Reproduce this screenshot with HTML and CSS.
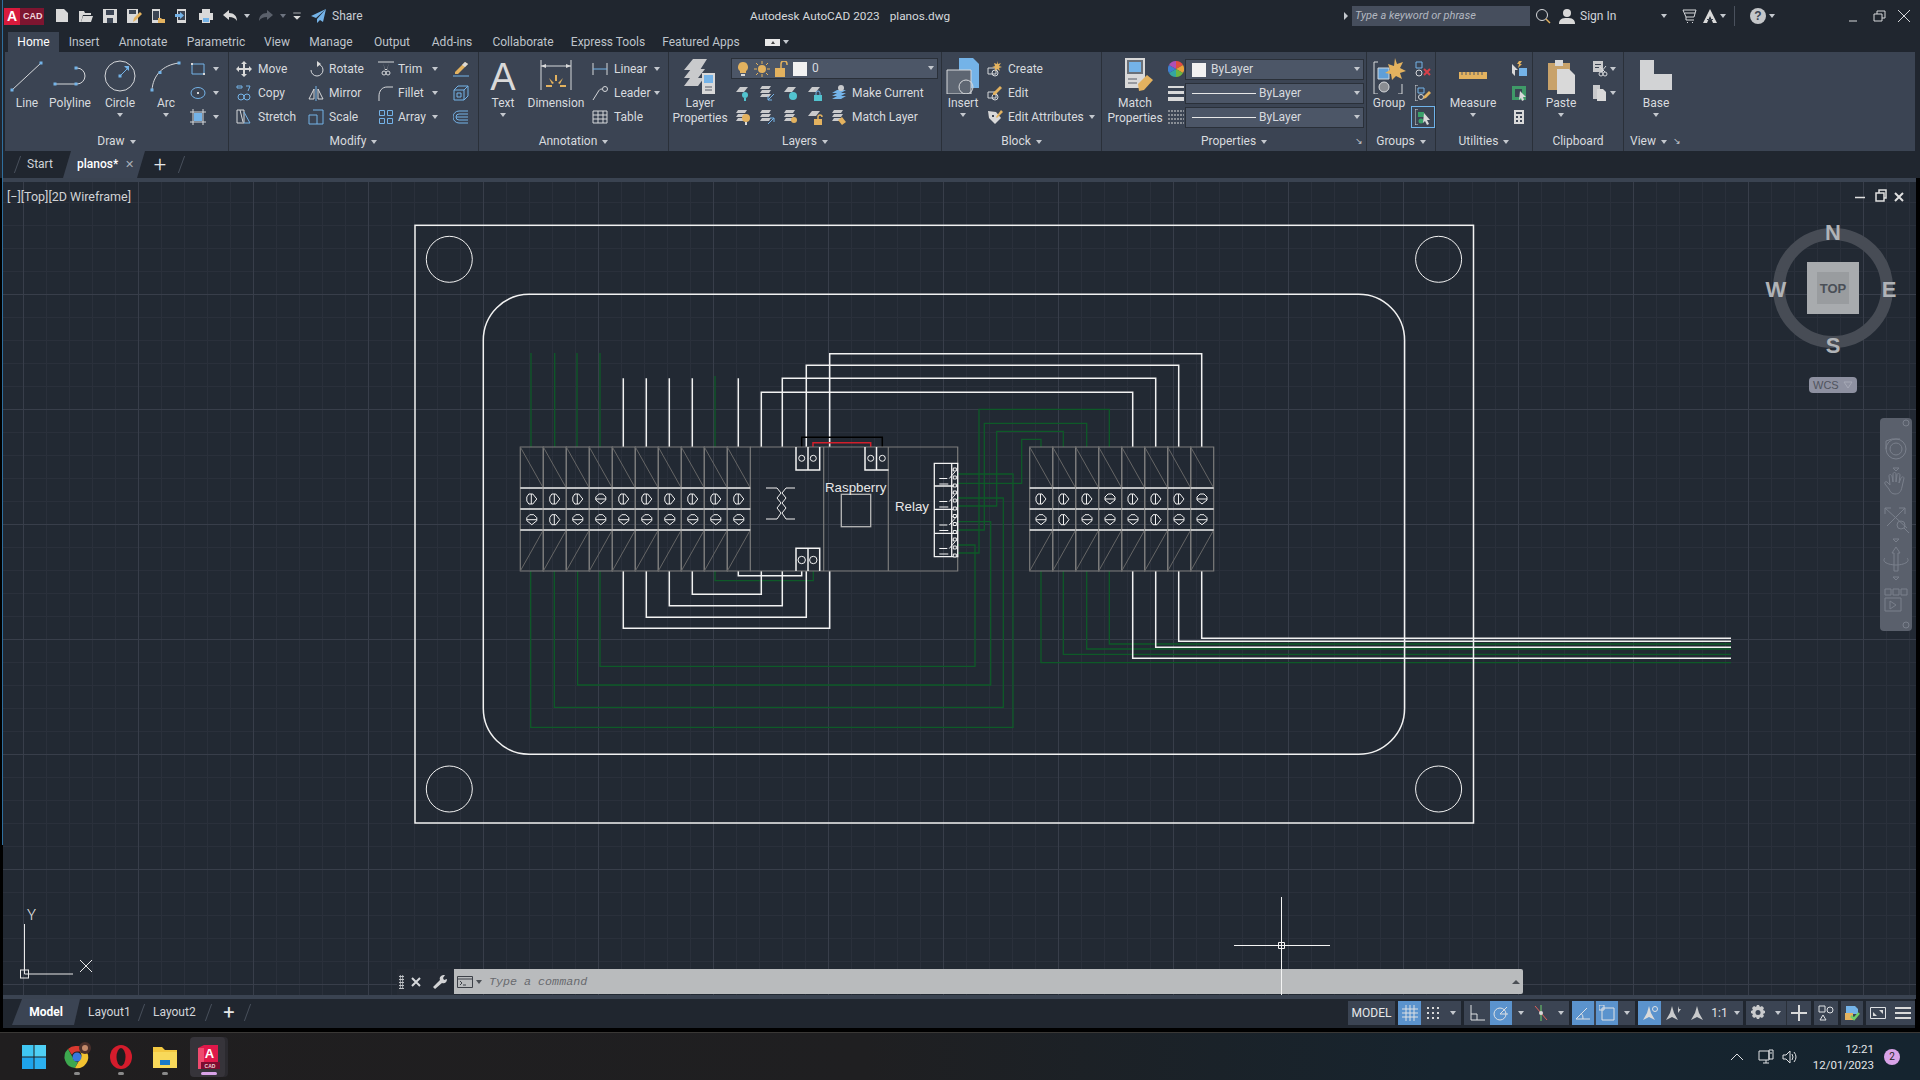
FILE: index.html
```html
<!DOCTYPE html>
<html lang="en">
<head>
<meta charset="utf-8">
<title>Autodesk AutoCAD 2023 planos.dwg</title>
<link rel="stylesheet" href="styles.css">
</head>
<body>
<div class="edge"></div>
<div class="top">
  <header class="titlebar">
    <div class="logo"><span class="logo-a">A</span><span class="logo-cad">CAD</span></div>
    <div class="qat">
      <svg class="ic" viewBox="0 0 16 16"><path class="fw" d="M2 1h8l4 4v9H2z"/></svg>
      <svg class="ic" viewBox="0 0 16 16"><path class="fw" d="M1 3h5l1 2h6v2H5l-2 7H1z"/><path class="fw" d="M5 8h10l-2 6H3z"/></svg>
      <svg class="ic" viewBox="0 0 16 16"><path class="fw" d="M1 1h14v14H1z"/><path class="dk" d="M4 2h8v5H4zM5 10h6v5H5z"/></svg>
      <svg class="ic" viewBox="0 0 16 16"><path class="fw" d="M1 1h11v14H1z"/><path class="dk" d="M3 2h7v4H3z"/><path class="fg" d="M7 14l1-4 6-6 2 2-6 6z"/></svg>
      <svg class="ic" viewBox="0 0 16 16"><path class="fw" d="M2 1h8v14H2z"/><path class="dk" d="M3 3h6v9H3z"/><path class="fg" d="M8 10h3l1 1h3v4H8z"/></svg>
      <svg class="ic" viewBox="0 0 16 16"><path class="fw" d="M3 1h9v14H3z"/><path class="dk" d="M4 3h7v9H4z"/><path class="fb" d="M1 6h5V4l4 3.500-4 3.500V9H1z"/></svg>
      <svg class="ic" viewBox="0 0 16 16"><path class="fw" d="M4 1h8v4H4zM1 5h14v7h-3v3H4v-3H1z"/><path class="fb" d="M5 10h6v4H5z"/></svg>
      <svg class="ic i-undo" viewBox="0 0 16 16"><path class="fw" d="M1 7l6-5v3c5 0 8 3 8 8-2-3-4-4-8-4v3z"/></svg>
      <i class="ar ar-undo"></i>
      <svg class="ic i-redo" viewBox="0 0 16 16"><path class="fd" d="M15 7L9 2v3C4 5 1 8 1 13c2-3 4-4 8-4v3z"/></svg>
      <i class="ar ar-dim"></i>
      <svg class="ic i-cust" viewBox="0 0 16 16"><path class="s" d="M3 4h10"/><path class="fw" d="M3 8h10l-5 5z"/></svg>
      <svg class="ic i-share" viewBox="0 0 16 16"><path class="fb" d="M15 1L0 8l5 2zM15 1L6 11v4l3-3 3 2z"/></svg>
      <span class="share">Share</span>
    </div>
    <div class="doc"><span>Autodesk AutoCAD 2023</span><span>planos.dwg</span></div>
    <div class="tb-right">
      <i class="tri-r"></i>
      <div class="search">Type a keyword or phrase</div>
      <svg class="ic i-mag" viewBox="0 0 16 16"><circle class="s" cx="7" cy="7" r="5.500"/><path class="sg" d="M11 11l4 4"/></svg>
      <svg class="ic i-user" viewBox="0 0 16 16"><circle class="fw" cx="8" cy="5" r="4"/><path class="fw" d="M0 16c0-5 3-6 8-6s8 1 8 6z"/></svg>
      <span class="signin">Sign In</span>
      <i class="ar ar-sign"></i>
      <svg class="ic i-cart" viewBox="0 0 16 16"><path class="s" d="M1 2h13l-2 7H4zM4 9v3h8M3 5h10M5 14.500h1M10 14.500h1"/></svg>
      <svg class="ic i-a" viewBox="0 0 16 16"><path class="fw" d="M8 1l7 14h-4L8 8l-3 7H1z"/><path class="dk" d="M5 11h6v1H5z"/></svg>
      <i class="ar ar-a"></i>
      <span class="tb-sep"></span>
      <span class="help">?</span>
      <i class="ar ar-help"></i>
      <svg class="ic i-min" viewBox="0 0 16 16"><path class="s" d="M3 13h8"/></svg>
      <svg class="ic i-res" viewBox="0 0 16 16"><path class="s" d="M3 6h8v7H3zM6 6V3h8v7h-3"/></svg>
      <svg class="ic i-close" viewBox="0 0 16 16"><path class="s" d="M2 2l12 12M14 2L2 14"/></svg>
    </div>
  </header>

  <nav class="rtabs">
    <span class="rtab active">Home</span><span class="rtab">Insert</span><span class="rtab">Annotate</span><span class="rtab">Parametric</span><span class="rtab">View</span><span class="rtab">Manage</span><span class="rtab">Output</span><span class="rtab">Add-ins</span><span class="rtab">Collaborate</span><span class="rtab">Express Tools</span><span class="rtab">Featured Apps</span>
    <span class="rtoggle"><i class="tri-w"></i></span><i class="ar"></i>
  </nav>

  <section class="ribbon">
    <div class="panel p-draw">
      <div class="pbody">
        <div class="tool w44"><svg class="big" viewBox="0 0 36 36"><path class="s" d="M3 32L32 5"/><path class="fb" d="M1.500 30.500h3v3h-3zM30.500 3.500h3v3h-3z"/></svg><span>Line</span></div>
        <div class="tool w42"><svg class="big" viewBox="0 0 36 36"><path class="s" d="M3 26h22a8 8 0 0 0 0-16"/><path class="fb" d="M1.500 24.500h3v3h-3zM22.500 24.500h3v3h-3zM22.500 8.500h3v3h-3z"/></svg><span>Polyline</span></div>
        <div class="tool w58"><svg class="big" viewBox="0 0 36 36"><circle class="s" cx="18" cy="18" r="15"/><path class="b" d="M18 18l7-7"/><path class="fb" d="M16.500 16.500h3v3h-3zM22 8h5v5z"/></svg><span>Circle</span><i class="ar"></i></div>
        <div class="tool w34"><svg class="big" viewBox="0 0 36 36"><path class="s" d="M4 32C5 18 14 7 31 5"/><path class="fb" d="M2.500 30.500h3v3h-3zM10.500 13h3v3h-3zM29.500 3.500h3v3h-3z"/></svg><span>Arc</span><i class="ar"></i></div>
        <div class="col f1 pl7 pr9">
          <div class="row"><svg class="ic" viewBox="0 0 16 16"><path class="b" d="M2 3h12v10H2z"/><path class="fw" d="M1 2h2v2H1zM13 12h2v2h-2z"/></svg><i class="ar ml-a"></i></div>
          <div class="row"><svg class="ic" viewBox="0 0 16 16"><ellipse class="b" cx="8" cy="8" rx="7" ry="5.500"/><path class="fw" d="M7 7h2v2H7z"/></svg><i class="ar ml-a"></i></div>
          <div class="row"><svg class="ic" viewBox="0 0 16 16"><path class="s" d="M3 0v16M13 0v16M0 3h16M0 13h16"/><path class="fb" d="M4 4h8v8H4z"/></svg><i class="ar ml-a"></i></div>
        </div>
      </div>
      <div class="ptitle">Draw <i class="ar"></i></div>
    </div>

    <div class="panel p-modify">
      <div class="pbody">
        <div class="col w79 pl7">
          <div class="row"><svg class="ic" viewBox="0 0 16 16"><path class="fw" d="M8 0l3 3H9v4h4V5l3 3-3 3V9H9v4h2l-3 3-3-3h2V9H3v2L0 8l3-3v2h4V3H5z"/></svg><span class="lab">Move</span></div>
          <div class="row"><svg class="ic" viewBox="0 0 16 16"><path class="b" d="M1 1h5v2H1zM10 1h4l-2 5"/><circle class="b" cx="5" cy="12" r="3"/><circle class="b" cx="11" cy="12" r="3"/></svg><span class="lab">Copy</span></div>
          <div class="row"><svg class="ic" viewBox="0 0 16 16"><path class="s" d="M1 1h7v13H1z"/><path class="b" d="M8 3l6 11H8"/><path class="s" d="M4 1l3 12"/></svg><span class="lab">Stretch</span></div>
        </div>
        <div class="col w70">
          <div class="row g5"><svg class="ic" viewBox="0 0 16 16"><path class="s" d="M9 3a6 6 0 1 1-6 6"/><path class="fw" d="M9 0l4 3-4 3z"/></svg><span class="lab">Rotate</span></div>
          <div class="row g5"><svg class="ic" viewBox="0 0 16 16"><path class="s" d="M1 14L6 4v10zM15 14L10 4v10z"/><path class="b" d="M8 1v15"/></svg><span class="lab">Mirror</span></div>
          <div class="row g5"><svg class="ic" viewBox="0 0 16 16"><path class="b" d="M1 6h8v9H1zM5 1h10v14H9"/></svg><span class="lab">Scale</span></div>
        </div>
        <div class="col w75 pr15">
          <div class="row g4"><svg class="ic" viewBox="0 0 16 16"><path class="s" d="M0 1h16"/><path class="fw" d="M5 2l2 7h2l2-7-2 6H7z"/><circle class="s" cx="6" cy="12" r="2"/><circle class="s" cx="10" cy="12" r="2"/></svg><span class="lab">Trim</span><i class="ar ml-a"></i></div>
          <div class="row g4"><svg class="ic" viewBox="0 0 16 16"><path class="s" d="M1 16v-5c0-5 3-9 8-9h6"/></svg><span class="lab">Fillet</span><i class="ar ml-a"></i></div>
          <div class="row g4"><svg class="ic" viewBox="0 0 16 16"><path class="b" d="M1.500 1.500h5v5h-5zM9.500 1.500h5v5h-5zM1.500 9.500h5v5h-5zM9.500 9.500h5v5h-5z"/></svg><span class="lab">Array</span><i class="ar ml-a"></i></div>
        </div>
        <div class="col">
          <div class="row"><svg class="ic" viewBox="0 0 16 16"><path class="fg" d="M2 11L12 1l3 2L5 13H2z"/><path class="fw" d="M12 1l3 2-3 3-3-2z"/><path class="b" d="M0 15h16"/></svg></div>
          <div class="row"><svg class="ic" viewBox="0 0 16 16"><path class="b" d="M1 5h10v10H1zM1 5l4-4h10v10l-4 4M4 8h4v4H4zM11 5l4-4"/></svg></div>
          <div class="row"><svg class="ic" viewBox="0 0 16 16"><path class="b" d="M15 2H6a6 6 0 0 0 0 12h9M15 5H6a3 3 0 0 0 0 6h9M3 8h12"/></svg></div>
        </div>
      </div>
      <div class="ptitle">Modify <i class="ar"></i></div>
    </div>

    <div class="panel p-annot">
      <div class="pbody">
        <div class="tool w48"><span class="big-a">A</span><span>Text</span><i class="ar"></i></div>
        <div class="tool w58"><svg class="big" viewBox="0 0 36 36"><path class="s" d="M3 2v30M33 2v30M3 8h30"/><path class="fw" d="M3 8l5-2v4zM33 8l-5-2v4z"/><path class="fg" d="M17 17h2v6h-2zM11 20l5 5-2 1zM25 20l-5 5 2 1zM8 27h6v2H8zM22 27h6v2h-6z"/></svg><span>Dimension</span></div>
        <div class="col f1 pl7 pr8">
          <div class="row"><svg class="ic" viewBox="0 0 16 16"><path class="s" d="M1 2v12M15 2v12"/><path class="b" d="M1 8h14"/></svg><span class="lab">Linear</span><i class="ar ml-a"></i></div>
          <div class="row"><svg class="ic" viewBox="0 0 16 16"><path class="s" d="M1 15l5-8c1-2 2-3 4-3"/><circle class="s" cx="13" cy="4" r="2.500"/></svg><span class="lab">Leader</span><i class="ar ml-a"></i></div>
          <div class="row"><svg class="ic" viewBox="0 0 16 16"><path class="s" d="M1 2h14v12H1zM1 6h14M1 10h14M6 2v12M11 2v12"/></svg><span class="lab">Table</span></div>
        </div>
      </div>
      <div class="ptitle">Annotation <i class="ar"></i></div>
    </div>

    <div class="panel p-layers">
      <div class="pbody">
        <div class="tool w62"><svg class="big" viewBox="0 0 36 36"><path class="fd2" d="M2 12L11 1h14l-7 11zM2 20l7-9h14l-7 9zM2 28l6-8h14l-6 8z"/><path class="fw" d="M20 15h13v21H20z"/><path class="fb" d="M22 17h9v8h-9z"/><path class="sd" d="M23 29h7M23 32h7"/></svg><span>Layer</span><span>Properties</span></div>
        <div class="col f1">
          <div class="combo c-layer">
            <svg class="ic" viewBox="0 0 16 16"><path class="fg" d="M8 1a5 5 0 0 1 3 9v2H5v-2A5 5 0 0 1 8 1z"/><path class="fw" d="M6 13h4v2H6z"/></svg>
            <svg class="ic" viewBox="0 0 16 16"><circle class="fg" cx="8" cy="8" r="4"/><path class="sgd" d="M8 0v3M8 13v3M0 8h3M13 8h3M2 2l2 2M12 12l2 2M14 2l-2 2M2 14l2-2"/></svg>
            <svg class="ic" viewBox="0 0 16 16"><path class="fg" d="M2 7h10v9H2z"/><path class="sg" d="M8 7V3a3 3 0 0 1 6 0v1"/></svg>
            <span class="swatch"></span><span>0</span><i class="ar combo-ar"></i>
          </div>
          <div class="row g8 pl4">
            <svg class="ic" viewBox="0 0 16 16"><path class="fd2" d="M1 7l4-5h8L9 7z"/><circle class="fc" cx="10" cy="10" r="3"/><path class="fc" d="M9 13h2v3H9z"/></svg>
            <svg class="ic" viewBox="0 0 16 16"><path class="fd2" d="M1 4l2-3h9l-2 3zM1 8l2-3h9l-2 3zM1 12l2-3h9l-2 3z"/><path class="b" d="M15 9l-6 6M9 11v4h4"/></svg>
            <svg class="ic" viewBox="0 0 16 16"><path class="fd2" d="M1 7l4-5h8L9 7z"/><circle class="fc" cx="10" cy="11" r="4"/></svg>
            <svg class="ic" viewBox="0 0 16 16"><path class="fd2" d="M1 7l4-5h8L9 7z"/><path class="fc" d="M7 10h8v6H7z"/><path class="b" d="M9 10V8a2 2 0 0 1 4 0v2"/></svg>
            <svg class="ic" viewBox="0 0 16 16"><path class="fb" d="M1 8l5-3h9l-5 3zM1 11l5-3h9l-5 3zM1 14l5-3h9l-5 3z"/><circle class="fd2" cx="10" cy="3" r="3"/></svg>
            <span class="lab lab-l">Make Current</span>
          </div>
          <div class="row g8 pl4">
            <svg class="ic" viewBox="0 0 16 16"><path class="fd2" d="M1 4l2-3h9l-2 3zM1 8l2-3h9l-2 3zM1 12l2-3h9l-2 3z"/><circle class="fg" cx="11" cy="9" r="4"/><path class="fw" d="M10 13h2v3h-2z"/></svg>
            <svg class="ic" viewBox="0 0 16 16"><path class="fd2" d="M1 4l2-3h9l-2 3zM1 8l2-3h9l-2 3zM1 12l2-3h9l-2 3z"/><path class="b" d="M9 15l6-6M11 9h4v4"/></svg>
            <svg class="ic" viewBox="0 0 16 16"><path class="fd2" d="M1 4l2-3h9l-2 3zM1 8l2-3h9l-2 3zM1 12l2-3h9l-2 3z"/><circle class="fg" cx="11" cy="11" r="3"/></svg>
            <svg class="ic" viewBox="0 0 16 16"><path class="fd2" d="M1 7l4-5h8L9 7z"/><path class="fg" d="M7 10h8v6H7z"/><path class="sg" d="M11 10V8a2 2 0 0 1 4 0"/></svg>
            <svg class="ic" viewBox="0 0 16 16"><path class="fd2" d="M1 4l2-3h9l-2 3zM1 8l2-3h9l-2 3zM1 12l2-3h9l-2 3z"/><path class="fg" d="M7 11l4-3 4 5-4 3z"/></svg>
            <span class="lab lab-l">Match Layer</span>
          </div>
        </div>
      </div>
      <div class="ptitle">Layers <i class="ar"></i></div>
    </div>

    <div class="panel p-block">
      <div class="pbody">
        <div class="tool w42"><svg class="big" viewBox="0 0 36 36"><path class="fb" d="M14 0h14l6 6v24H14z"/><path class="ins" d="M2 12h24v24H2z"/><circle class="ins2" cx="21" cy="29" r="7"/></svg><span>Insert</span><i class="ar"></i></div>
        <div class="col f1 pl3 pr6">
          <div class="row g5"><svg class="ic" viewBox="0 0 16 16"><path class="s" d="M1 7h8v6H1z"/><circle class="s" cx="8" cy="12" r="3"/><path class="fg" d="M10 0l1 3 3-1-2 3 3 1-3 1 1 3-3-2-2 2 0-3-3-1 3-1-1-3 3 1z"/></svg><span class="lab">Create</span></div>
          <div class="row g5"><svg class="ic" viewBox="0 0 16 16"><path class="s" d="M1 7h8v6H1z"/><circle class="s" cx="8" cy="12" r="3"/><path class="fg" d="M6 8l7-7 2 2-7 7H6z"/></svg><span class="lab">Edit</span></div>
          <div class="row g5"><svg class="ic" viewBox="0 0 16 16"><path class="fw" d="M1 2l8 1 5 6-6 6-6-6z"/><path class="dk" d="M5 6h2v2H5z"/><path class="fg" d="M9 8l5-7 2 2-6 6z"/></svg><span class="lab">Edit Attributes</span><i class="ar ml-a"></i></div>
        </div>
      </div>
      <div class="ptitle">Block <i class="ar"></i></div>
    </div>

    <div class="panel p-props">
      <div class="pbody">
        <div class="tool w66"><svg class="big" viewBox="0 0 36 36"><path class="fw" d="M8 0h20v30H8z"/><path class="dk2" d="M10 2h16v14H10z"/><path class="fb" d="M12 4h12v10H12z"/><path class="sd" d="M11 21h9M11 25h9"/><path class="fg" d="M21 26l9-9 6 5-9 10-5 1z"/></svg><span>Match</span><span>Properties</span></div>
        <div class="col w17">
          <div class="row"><svg class="ic" viewBox="0 0 16 16"><path d="M8 0a8 8 0 0 1 7 4L8 8z" fill="#e34c3f"/><path d="M15 4a8 8 0 0 1 0 8L8 8z" fill="#e8a23a"/><path d="M15 12a8 8 0 0 1-7 4V8z" fill="#6fb53f"/><path d="M8 16a8 8 0 0 1-7-4l7-4z" fill="#34a6a0"/><path d="M1 12a8 8 0 0 1 0-8l7 4z" fill="#3f7fd0"/><path d="M1 4a8 8 0 0 1 7-4v8z" fill="#b04fb5"/></svg></div>
          <div class="row"><svg class="ic" viewBox="0 0 16 16"><path class="fw" d="M0 1h16v2H0zM0 6h16v3H0zM0 12h16v4H0z"/></svg></div>
          <div class="row"><svg class="ic" viewBox="0 0 16 16"><path class="sdash" d="M0 2h16M0 6h16M0 10h16M0 14h16"/></svg></div>
        </div>
        <div class="col combos">
          <div class="combo c-prop"><span class="swatch sw-p"></span><span>ByLayer</span><i class="ar combo-ar"></i></div>
          <div class="combo c-prop"><span class="ln"></span><span class="bl">ByLayer</span><i class="ar combo-ar"></i></div>
          <div class="combo c-prop"><span class="ln"></span><span class="bl">ByLayer</span><i class="ar combo-ar"></i></div>
        </div>
      </div>
      <div class="ptitle pt-launch"><span class="pt-c">Properties <i class="ar"></i></span><span class="launch">&#8600;</span></div>
    </div>

    <div class="panel p-groups">
      <div class="pbody">
        <div class="tool w44"><svg class="big" viewBox="0 0 36 36"><path class="s" d="M7 4H3v32h4M27 36h4V26"/><path class="fb2" d="M7 10h11v11H7z"/><circle class="fgr" cx="13" cy="29" r="5"/><path class="fg" d="M24 0l2 6 6-2-3 6 6 3-6 2 2 6-6-3-4 4-1-6-6-1 5-3-2-6 6 2z"/></svg><span>Group</span></div>
        <div class="col w24">
          <div class="row rc"><svg class="ic" viewBox="0 0 16 16"><path class="b" d="M1 1h6v6H1z"/><circle class="s" cx="4" cy="12" r="3"/><path class="sr" d="M9 8l6 6M15 8l-6 6"/></svg></div>
          <div class="row rc"><svg class="ic" viewBox="0 0 16 16"><path class="s" d="M3 0H0v16h3"/><path class="b" d="M3 3h6v5H3z"/><circle class="s" cx="6" cy="12" r="2.500"/><path class="fg" d="M8 14l1-3 5-5 2 2-5 5z"/></svg></div>
          <div class="row rc hl"><svg class="ic" viewBox="0 0 16 16"><path class="s" d="M3 0H0v16h3"/><path class="fg2" d="M3 3h6v5H3z"/><circle class="fg2" cx="6" cy="12" r="2.500"/><path class="fw" d="M9 4l6 7-3 0 2 4-2 1-2-4-2 2z"/></svg></div>
        </div>
      </div>
      <div class="ptitle">Groups <i class="ar"></i></div>
    </div>

    <div class="panel p-util">
      <div class="pbody">
        <div class="tool w74"><svg class="big" viewBox="0 0 36 36"><path class="fg" d="M4 14h28v7H4z"/><path class="sd" d="M7 14v3M11 14v3M15 14v3M19 14v3M23 14v3M27 14v3"/></svg><span>Measure</span><i class="ar"></i></div>
        <div class="col">
          <div class="row"><svg class="ic" viewBox="0 0 16 16"><path class="fw" d="M1 3l6 6H4l0 6-3-3z"/><path class="fb" d="M8 7h8v8H8z"/><path class="fg" d="M8 0l3 0-2 3 2 0-4 4 1-4H6z"/></svg></div>
          <div class="row"><svg class="ic" viewBox="0 0 16 16"><path class="fgn" d="M1 1h14v14H1z"/><path class="dk" d="M4 4h7v8H4z"/><path class="fw" d="M9 6l6 6-3 0 1 3-2 1-1-3-2 2z"/></svg></div>
          <div class="row"><svg class="ic" viewBox="0 0 16 16"><path class="fw" d="M3 1h10v14H3z"/><path class="dk" d="M5 3h6v2H5zM5 7h2v2H5zM9 7h2v2H9zM5 11h2v2H5zM9 11h2v2H9z"/></svg></div>
        </div>
      </div>
      <div class="ptitle">Utilities <i class="ar"></i></div>
    </div>

    <div class="panel p-clip">
      <div class="pbody">
        <div class="tool w56"><svg class="big" viewBox="0 0 36 36"><path d="M5 5h22v27H5z" fill="#c8a26a"/><path class="fw" d="M12 2h8v6h-8z"/><path class="fw" d="M14 11h12l6 6v19H14z"/></svg><span>Paste</span><i class="ar"></i></div>
        <div class="col f1 pl3 pr7">
          <div class="row"><svg class="ic" viewBox="0 0 16 16"><path class="fd2" d="M1 0h10v11H1z"/><path class="dk" d="M3 3h6v1H3zM3 6h4v1H3z"/><circle class="s" cx="9" cy="13" r="2"/><circle class="s" cx="13" cy="13" r="2"/><path class="s" d="M9 11l5-6M13 11L8 6"/></svg><i class="ar ml-a"></i></div>
          <div class="row"><svg class="ic" viewBox="0 0 16 16"><path class="fd2" d="M1 0h7l0 14H1z"/><path class="fw" d="M5 4h6l3 3v9H5z"/></svg><i class="ar ml-a"></i></div>
        </div>
      </div>
      <div class="ptitle">Clipboard</div>
    </div>

    <div class="panel p-view">
      <div class="pbody">
        <div class="tool w64"><svg class="big" viewBox="0 0 36 36"><path class="fd3" d="M2 2h14v14h18v16H2z"/></svg><span>Base</span><i class="ar"></i></div>
      </div>
      <div class="ptitle pt-left">View <i class="ar"></i><span class="launch l2">&#8600;</span></div>
    </div>
  </section>

  <nav class="ftabs">
    <i class="slash"></i>
    <span class="ftab">Start</span>
    <span class="ftab active"><b>planos*</b><span class="fx">&#10005;</span></span>
    <span class="fplus">+</span>
    <i class="slash"></i>
  </nav>
</div>
<div class="strip"></div>

<main class="canvas">
  <div class="vp-label">[&#8722;][Top][2D Wireframe]</div>
  <svg class="drawing" viewBox="3 182 1913 813" width="1913" height="813">
    <defs>
      <g id="cell">
        <path class="cg" d="M0 0h23v124H0z"/>
        <path class="cd" d="M0 0l23 41M0 124l23-41"/>
        <path class="cw" d="M0 41h23M0 62h23M0 83h23"/>
      </g>
      <g id="sv"><path class="sc" d="M-3-5h4l4 5-4 5h-4l-2-3v-4z"/><path class="sc" d="M-.5-5V5"/></g>
      <g id="sh"><path class="sc" d="M-5-2l3-3h4l3 3v3l-5 4-5-4z"/><path class="sc" d="M-5 0H5"/></g>
      <g id="sw">
        <path class="rl" d="M5 15.500h8M15 15.500l6-7M18 7h5M5 21h9"/>
        <path class="rlw" d="M19 5h3v3h-3zM19 13h3v3h-3zM19 21h3v3h-3z"/>
      </g>
    </defs>

    <g class="green">
      <path d="M531 447V353M554.700 447V353M577 447V353M600 447V353M715 447V376"/>
      <path d="M530.700 571V727.300H1013V474H958"/>
      <path d="M554.300 571V707.300H1003.300V498H958"/>
      <path d="M577.600 571V685H990.700V521.700H958"/>
      <path d="M600 571V666.300H975V545H958"/>
      <path d="M1109.300 447V409.300H979V553H958"/>
      <path d="M1086.700 447V423.300H984.300V530H958"/>
      <path d="M1063.300 447V431.300H996.700V506H958"/>
      <path d="M1041 447V439.300H1021.700V483.300H958"/>
      <path d="M1041 571V662.700H1731M1063.300 571V654.300H1731M1086.700 571V649H1731M1109.300 571V644H1731"/>
      <path d="M715 571V580.700H813.300V571"/>
    </g>

    <g class="wh">
      <rect x="415" y="225.300" width="1058.500" height="597.700"/>
      <rect x="483.300" y="294.300" width="921.300" height="460" rx="46" ry="46"/>
      <circle class="thin" cx="449.300" cy="259.300" r="23"/>
      <circle class="thin" cx="1438.600" cy="259.300" r="23"/>
      <circle class="thin" cx="449.300" cy="789" r="23"/>
      <circle class="thin" cx="1438.600" cy="789" r="23"/>
      <path d="M623.300 447V378.300M646.300 447V378.300M669.300 447V378.300M692.300 447V378.300M738.300 447V378.300"/>
      <path d="M761.300 447V392.300H1132.700V447"/>
      <path d="M782.300 447V378.300H1155.700V447"/>
      <path d="M806.300 447V365.300H1178.700V447"/>
      <path d="M829.700 447V353.700H1201.700V447"/>
      <path d="M623.300 571V628.300H829.700V571"/>
      <path d="M646.300 571V617.300H806.300V571"/>
      <path d="M669.300 571V605.700H782.300V571"/>
      <path d="M692.300 571V594.300H761.300V571"/>
      <path d="M738.300 571V575.700H801.700V571"/>
      <path d="M1132.700 571V658.300H1731M1155.700 571V647.300H1731M1178.700 571V641.300H1731M1201.700 571V638.300H1731"/>
    </g>

    <path class="black" d="M801.700 447V437.300H882.300V447"/>
    <path class="red" d="M813 447V442.700H870.700V447"/>

    <path class="cg" d="M750.300 447H957.700V571H750.300M823.700 447V571M888.300 447V571"/>

    <use href="#cell" x="520.300" y="447"/><use href="#cell" x="543.300" y="447"/><use href="#cell" x="566.300" y="447"/><use href="#cell" x="589.300" y="447"/><use href="#cell" x="612.300" y="447"/><use href="#cell" x="635.300" y="447"/><use href="#cell" x="658.300" y="447"/><use href="#cell" x="681.300" y="447"/><use href="#cell" x="704.300" y="447"/><use href="#cell" x="727.300" y="447"/>
    <use href="#cell" x="1029.700" y="447"/><use href="#cell" x="1052.700" y="447"/><use href="#cell" x="1075.700" y="447"/><use href="#cell" x="1098.700" y="447"/><use href="#cell" x="1121.700" y="447"/><use href="#cell" x="1144.700" y="447"/><use href="#cell" x="1167.700" y="447"/><use href="#cell" x="1190.700" y="447"/>

    <use href="#sv" x="531.800" y="499"/><use href="#sv" x="554.800" y="499"/><use href="#sv" x="577.800" y="499"/><use href="#sh" x="600.800" y="499"/><use href="#sv" x="623.800" y="499"/><use href="#sv" x="646.800" y="499"/><use href="#sv" x="669.800" y="499"/><use href="#sv" x="692.800" y="499"/><use href="#sv" x="715.800" y="499"/><use href="#sv" x="738.800" y="499"/>
    <use href="#sh" x="531.800" y="519.700"/><use href="#sv" x="554.800" y="519.700"/><use href="#sh" x="577.800" y="519.700"/><use href="#sh" x="600.800" y="519.700"/><use href="#sh" x="623.800" y="519.700"/><use href="#sh" x="646.800" y="519.700"/><use href="#sh" x="669.800" y="519.700"/><use href="#sh" x="692.800" y="519.700"/><use href="#sh" x="715.800" y="519.700"/><use href="#sh" x="738.800" y="519.700"/>
    <use href="#sv" x="1041" y="499"/><use href="#sv" x="1064" y="499"/><use href="#sv" x="1087" y="499"/><use href="#sh" x="1110" y="499"/><use href="#sv" x="1133" y="499"/><use href="#sv" x="1156" y="499"/><use href="#sv" x="1179" y="499"/><use href="#sh" x="1202" y="499"/>
    <use href="#sh" x="1041" y="519.700"/><use href="#sv" x="1064" y="519.700"/><use href="#sh" x="1087" y="519.700"/><use href="#sh" x="1110" y="519.700"/><use href="#sh" x="1133" y="519.700"/><use href="#sv" x="1156" y="519.700"/><use href="#sh" x="1179" y="519.700"/><use href="#sh" x="1202" y="519.700"/>

    <g class="wh">
      <path d="M796 447V470H819.700V447M808 447V470M865 447V470H888.500M876.500 447V470"/>
      <path d="M796 571V548.300H819.700V571M808 548.300V571"/>
      <path class="thin" d="M766 488H777l4 5-4 5 4 5-4 5 4 5-4 6H766"/>
      <path class="thin" d="M795 488H786l-4 5 4 5-4 5 4 5-4 5 4 6H795"/>
    </g>
    <g class="wh thin">
      <circle cx="801.700" cy="458.300" r="3"/><circle cx="813.300" cy="458.300" r="3"/>
      <circle cx="870.700" cy="458.300" r="3"/><circle cx="882.300" cy="458.300" r="3"/>
      <circle cx="801.700" cy="560" r="3.700"/><circle cx="813.300" cy="560" r="3.700"/>
    </g>
    <rect class="inner" x="841.300" y="494.300" width="29.400" height="32.400"/>
    <text class="dtxt" x="825" y="492">Raspberry</text>
    <text class="dtxt" x="895" y="511">Relay</text>

    <path class="rel" d="M934.300 463.300H957.700V556.700H934.300zM934.300 486H957.700M934.300 509.300H957.700M934.300 533.300H957.700M951.700 463.300V556.700"/>
    <use href="#sw" x="934.300" y="463"/><use href="#sw" x="934.300" y="486"/><use href="#sw" x="934.300" y="509.500"/><use href="#sw" x="934.300" y="533"/>

    <g class="ucs">
      <path d="M24.500 924V974H73M80 960l12 12M92 960l-12 12"/>
      <rect x="20.500" y="970" width="8" height="8"/>
    </g>
    <text class="ucs-t" x="27" y="920">Y</text>

    <g class="vc">
      <circle class="ring" cx="1833" cy="288" r="54"/>
      <rect class="vc-o" x="1807" y="262" width="52" height="52"/>
      <rect class="vc-i" x="1817" y="272" width="32" height="32"/>
      <text class="vc-top" x="1833" y="293">TOP</text>
      <text class="vc-d" x="1833" y="240">N</text>
      <text class="vc-d" x="1833" y="353">S</text>
      <text class="vc-d" x="1776" y="297">W</text>
      <text class="vc-d" x="1889" y="297">E</text>
      <rect class="wcs" x="1809" y="377" width="48" height="16" rx="4"/>
      <text class="wcs-t" x="1813" y="389">WCS</text>
      <path class="wcs-ar" d="M1844 382h8l-4 6z"/>
    </g>
    <g class="vp-ctl">
      <path d="M1855 197.500h10M1876 193h8v8h-8zM1879 193v-3h7v8h-2"/>
      <path class="vp-x" d="M1895 193l8 8M1903 193l-8 8"/>
    </g>
    <g class="nav">
      <rect class="nav-bg" x="1880" y="418" width="32" height="213" rx="4"/>
      <circle cx="1896" cy="449" r="10"/><circle cx="1896" cy="449" r="6"/>
      <path d="M1886 449v-8l6-2h8M1893 468h6l-3 3z"/>
      <path d="M1889 489l-4-5c-1-2 1-3 2-2l3 3-1-9c0-2 2-2 3 0l1 6v-8c0-2 3-2 3 0v8l1-7c0-2 3-2 3 0l-1 8 2-5c1-2 3-1 3 0l-2 9c-1 5-3 7-7 7-3 0-5-2-6-5z"/>
      <path d="M1885 508l22 20M1905 508l-18 18M1885 508h6M1885 508v6M1905 508h-6M1905 508v6"/>
      <circle cx="1901" cy="525" r="4"/><path d="M1904 528l5 5"/>
      <path d="M1893 539h6l-3 3zM1893 577h6l-3 3z"/>
      <path d="M1896 547l4 6h-2v18h-4v-18h-2zM1885 558c-4 4 4 7 11 7s15-3 11-7"/>
      <path d="M1885 589h6v6h-6zM1893 589h6v6h-6zM1901 589h6v6h-6zM1885 598h16v13h-16zM1890 601l6 4-6 4z"/>
      <circle cx="1906" cy="423" r="3"/><circle cx="1906" cy="625" r="3"/>
    </g>
  </svg>

  <div class="cmd">
    <div class="cmd-tools">
      <span class="grip"></span>
      <svg class="ic" viewBox="0 0 16 16"><path class="s2" d="M4 4l8 8M12 4l-8 8"/></svg>
      <svg class="ic" viewBox="0 0 16 16"><path class="fd3" d="M1 13l7-7c-1-3 1-5 5-5l-2 3 1 2 3-1c0 4-3 5-5 4l-7 6z"/></svg>
    </div>
    <div class="cmd-input">
      <svg class="ic" viewBox="0 0 16 16"><path class="cmd-i" d="M.5 2.500h15v11H.5zM.5 5h15M3 7l2 2-2 2M6 11h3"/></svg>
      <i class="ar ar-dark"></i>
      <span class="cmd-text">Type a command</span>
      <i class="tri-up"></i>
    </div>
  </div>

  <svg class="cursor" width="100" height="100" viewBox="0 0 100 100">
    <path d="M1 49.500H97M48.500 1V100M45.500 46.500h6v6h-6z"/>
  </svg>
</main>

<div class="strip"></div>
<footer class="status">
  <div class="ltabs">
    <span class="ltab active">Model</span>
    <span class="ltab l1">Layout1</span><i class="slash"></i>
    <span class="ltab l2t">Layout2</span><i class="slash"></i>
    <span class="lplus">+</span><i class="slash"></i>
  </div>
  <div class="sbar">
    <div class="sg1"><span class="model">MODEL</span></div>
    <div class="sg1">
      <span class="sb on"><svg class="ic" viewBox="0 0 16 16"><path class="s1" d="M4 0v16M8 0v16M12 0v16M0 4h16M0 8h16M0 12h16"/></svg></span>
      <span class="sb"><svg class="ic" viewBox="0 0 16 16"><path class="fw" d="M2 2h2v2H2zM7 2h2v2H7zM12 2h2v2h-2zM2 7h2v2H2zM7 7h2v2H7zM12 7h2v2h-2zM2 12h2v2H2zM7 12h2v2H7zM12 12h2v2h-2z"/></svg></span>
      <span class="sar"><i class="ar"></i></span>
    </div>
    <div class="sg1">
      <span class="sb w26"><svg class="ic" viewBox="0 0 16 16"><path class="s1" d="M2 0v15h14M2 9h6v6"/></svg></span>
      <span class="sb on w22"><svg class="ic" viewBox="0 0 16 16"><circle class="s1" cx="7" cy="9" r="6"/><path class="s1" d="M7 9l7-7M7 9h8"/></svg></span>
      <span class="sar"><i class="ar"></i></span>
      <span class="sb"><svg class="ic" viewBox="0 0 16 16"><path d="M2 1l12 14" stroke="#e2605a" fill="none"/><path d="M8 0v16" stroke="#6fcf6a" fill="none"/><circle class="fw" cx="8" cy="8" r="2"/></svg></span>
      <span class="sar"><i class="ar"></i></span>
    </div>
    <div class="sg1">
      <span class="sb on w22"><svg class="ic" viewBox="0 0 16 16"><path class="s1" d="M1 14h14M1 14L12 3M8 14a7 7 0 0 0-2-6"/></svg></span>
      <span class="sb on w22 m2"><svg class="ic" viewBox="0 0 16 16"><path class="s1" d="M3 3h12v12H3z"/><path class="s1" d="M0 0h5v5H0z"/></svg></span>
      <span class="sar"><i class="ar"></i></span>
    </div>
    <div class="sg1">
      <span class="sb on"><svg class="ic" viewBox="0 0 16 16"><path class="fw" d="M7 1l2 7 4 7-6-3-6 3 4-7z"/><circle class="s1" cx="13" cy="4" r="2.500"/></svg></span>
      <span class="sb w24"><svg class="ic" viewBox="0 0 16 16"><path class="fd2" d="M7 1l2 7 4 7-6-3-6 3 4-7z"/><path class="fd2" d="M13 1l1 3 2 0-3 4z"/></svg></span>
      <span class="sb w24"><svg class="ic" viewBox="0 0 16 16"><path class="fd2" d="M8 1l2 7 4 7-6-3-6 3 4-7z"/></svg></span>
      <span class="scale">1:1</span><span class="sar narrow"><i class="ar"></i></span>
    </div>
    <div class="sg1">
      <span class="sb w24"><svg class="ic" viewBox="0 0 16 16"><path class="fd2" d="M7 0h2l1 2 2-1 2 2-1 2 2 1v2l-2 1 1 2-2 2-2-1-1 2H7l-1-2-2 1-2-2 1-2-2-1V6l2-1-1-2 2-2 2 1z"/><circle class="dk3" cx="8" cy="7.500" r="2.500"/></svg></span>
      <span class="sar w16"><i class="ar"></i></span>
      <span class="sb w25 bl1"><svg class="ic" viewBox="0 0 16 16"><path class="fw" d="M7 0h2v7h7v2H9v7H7V9H0V7h7z"/></svg></span>
    </div>
    <div class="sg1"><span class="sb w24"><svg class="ic" viewBox="0 0 16 16"><path class="s1" d="M1 1h6v6H1z"/><circle class="s1" cx="12" cy="5" r="3"/><path class="s1" d="M5 10l3 5H2z"/></svg></span></div>
    <div class="sg1"><span class="sb w22"><svg class="ic" viewBox="0 0 16 16"><path class="fb" d="M2 1h9l3 3v5H2z"/><path class="fg" d="M1 8h8v7H1z"/><path d="M7 11l3 3 5-6" stroke="#6fcf6a" stroke-width="2.500" fill="none"/></svg></span></div>
    <div class="sg1 slast">
      <span class="sb w24"><svg class="ic" viewBox="0 0 16 16"><path class="s1" d="M.5 2.500h15v11H.5z"/><path class="fw" d="M9 5h4v4zM7 11H3V7z"/></svg></span>
      <span class="sb w25"><svg class="ic" viewBox="0 0 16 16"><path class="fw" d="M0 2h16v2H0zM0 7h16v2H0zM0 12h16v2H0z"/></svg></span>
    </div>
  </div>
</footer>

<footer class="taskbar">
  <div class="task-l">
    <span class="tk w-start"><svg class="tic" viewBox="0 0 24 24"><path d="M0 0h11.500v11.500H0z" fill="#3fc6f2"/><path d="M12.500 0H24v11.500H12.500z" fill="#4fd0f5"/><path d="M0 12.500h11.500V24H0z" fill="#1ea4ec"/><path d="M12.500 12.500H24V24H12.500z" fill="#2bb0f0"/></svg></span>
    <span class="tk"><svg class="tic" viewBox="0 0 24 24"><path d="M12 1a11 11 0 0 1 9.500 5.500H12A5.500 5.500 0 0 0 7 10L3 4a11 11 0 0 1 9-3z" fill="#d9392f"/><path d="M3 4l5 9a5.500 5.500 0 0 0 5 4l-3 6A11 11 0 0 1 3 4z" fill="#3da84f"/><path d="M21.500 6.500A11 11 0 0 1 10 23l5-9a5.500 5.500 0 0 0 0-7.500z" fill="#f2c230"/><circle cx="12" cy="12" r="4.500" fill="#3a78dc"/><circle cx="20" cy="3" r="6" fill="#4a2f2a"/><circle cx="20" cy="3" r="3" fill="#c58a6a"/></svg></span>
    <span class="tk"><svg class="tic" viewBox="0 0 24 24"><ellipse cx="12" cy="12" rx="11" ry="12" fill="#d41c2c"/><ellipse cx="12" cy="12" rx="4.500" ry="9" fill="#1f1d1f"/></svg></span>
    <span class="tk"><svg class="tic" viewBox="0 0 24 24"><path d="M0 2h9l3 3h12v18H0z" fill="#f3c840"/><path d="M0 7h24v16H0z" fill="#f8d95a"/><path d="M7 15h10v5H7z" fill="#1a7ac8"/></svg></span>
    <span class="tk tk-act"><svg class="tic" viewBox="0 0 24 24"><path d="M2 3l6-3h14v24H8l-6 0z" fill="#e0184a"/><path d="M2 3v21h6V3z" fill="#ef4a6f"/><path d="M5 17h19v7H5z" fill="#7b0c30"/><text class="t-a" x="13.500" y="13">A</text><text class="t-cad" x="14" y="22.500">CAD</text></svg></span>
    <i class="dot d1"></i><i class="dot d2"></i><i class="dot d3"></i><i class="dot d4"></i>
  </div>
  <div class="tray">
    <svg class="tri-caret" viewBox="0 0 14 8" width="14" height="8"><path class="s1" d="M1 7l6-6 6 6"/></svg>
    <svg class="tic-s" viewBox="0 0 16 16"><path class="s1" d="M1 2h10v9H1zM5 14h6M8 11v3M11 1h4v9h-4zM12 4h2"/></svg>
    <svg class="tic-s" viewBox="0 0 16 16"><path class="s1" d="M1 6h3l4-4v12l-4-4H1zM10 5q2 3 0 6M12 3q4 5 0 10"/></svg>
    <div class="clock"><span>12:21</span><span>12/01/2023</span></div>
    <span class="badge">2</span>
  </div>
</footer>
</body>
</html>
```

FILE: styles.css
```css
* { box-sizing: border-box; }
html, body { margin: 0; padding: 0; width: 1920px; height: 1080px; overflow: hidden; }
body { background: #000; font: 12px/15px Roboto, "Liberation Sans", sans-serif; color: #d2d5da; position: relative; }

.edge { position: absolute; left: 2px; top: 0; width: 1px; height: 845px; background: #2f6f9e; z-index: 3; }
.top { padding-left: 3px; background: #20262f; height: 178px; }

/* svg helper paints */
.ic { width: 16px; height: 16px; flex: none; display: block; }
.big { width: 36px; height: 36px; display: block; margin-bottom: 2px; flex: none; }
.s, .b, .s1, .s2, .sg, .sgd, .sd, .sr, .sdash, .cmd-i { fill: none; }
.s { stroke: #d6d8db; }
.s1 { stroke: #dfe1e4; }
.s2 { stroke: #d6d8db; stroke-width: 2; }
.b { stroke: #74b3e8; }
.sg { stroke: #e3b25f; stroke-width: 1.500; }
.sgd { stroke: #e3b25f; }
.sd { stroke: #555b66; }
.sr { stroke: #d9414a; stroke-width: 2; }
.sdash { stroke: #d8d8d8; stroke-dasharray: 2 1; }
.fw { fill: #d9d9d9; }
.fb { fill: #74b3e8; }
.fb2 { fill: #5f9fd8; stroke: #cfd6dc; }
.fg { fill: #e3b25f; }
.fg2 { fill: #3aa06a; }
.fgn { fill: #3f9a68; }
.fgr { fill: #8a8d92; stroke: #d6d8db; }
.fc { fill: #52c3cf; }
.fd { fill: #5a606b; }
.fd2 { fill: #c9cacc; }
.fd3 { fill: #d2d3d5; }
.dk { fill: #3b4453; }
.dk2 { fill: #6a7078; }
.dk3 { fill: #3b4453; }
.ins { fill: #5e6672; stroke: #d6d8db; }
.ins2 { fill: none; stroke: #d6d8db; }

/* dropdown triangle */
.ar { display: block; flex: none; width: 0; height: 0; border: 3px solid transparent; border-bottom-width: 0; border-top: 4px solid #c4c8ce; }
.ar-dim { border-top-color: #6d7480; margin-left: -2px; }
.ar-dark { border-top-color: #4b4f55; margin-left: 3px; }
.ml-a { margin-left: auto; }

/* title bar */
.titlebar { height: 32px; position: relative; display: flex; align-items: center; }
.logo { display: flex; margin-left: 1px; height: 17px; width: 40px; background: #7d1530; align-items: stretch; }
.logo-a { width: 16px; background: #d81a3c; color: #fff; font: bold 14px/17px "Liberation Sans", sans-serif; text-align: center; }
.logo-cad { font: bold 9px/17px "Liberation Sans", sans-serif; color: #f0d6dc; padding-left: 3px; }
.qat { display: flex; align-items: center; gap: 8px; margin-left: 10px; }
.ar-undo { margin-left: -2px; }
.i-cust { margin-left: -3px; width: 12px; }
.share { margin-left: -3px; color: #c9cdd3; }
.doc { position: absolute; left: 747px; top: 9px; display: flex; gap: 10px; font-size: 11.800px; color: #d5d8dc; white-space: nowrap; }
.tb-right { position: absolute; left: 1340px; right: 0; top: 0; height: 32px; display: flex; align-items: center; }
.tri-r { width: 0; height: 0; border: 4px solid transparent; border-left: 4px solid #c4c8ce; border-right-width: 0; margin-left: 1px; }
.search { margin-left: 4px; width: 178px; height: 20px; background: #464e5d; padding-left: 3px; font: italic 11px/19px Roboto, sans-serif; color: #b3b8c0; }
.i-mag { margin-left: 5px; }
.i-user { margin-left: 8px; }
.signin { margin-left: 5px; width: 60px; }
.ar-sign { margin-left: 21px; }
.i-cart { margin-left: 15px; }
.i-a { margin-left: 4px; }
.ar-a { margin-left: 2px; }
.tb-sep { width: 1px; height: 20px; background: #4a515d; margin-left: 8px; }
.help { margin-left: 15px; width: 16px; height: 16px; border-radius: 50%; background: #c4c6c9; color: #3b4453; font: bold 12px/16px "Liberation Sans", sans-serif; text-align: center; }
.ar-help { margin-left: 3px; }
.i-min { margin-left: 71px; }
.i-res { margin-left: 9px; }
.i-close { margin-left: 9px; }

/* ribbon tabs */
.rtabs { height: 20px; margin-left: 5px; display: flex; align-items: center; color: #bfc4cb; }
.rtab { line-height: 20px; text-align: center; white-space: nowrap; flex: none; }
.rtab:nth-child(1) { width: 51px; }
.rtab:nth-child(2) { width: 50px; }
.rtab:nth-child(3) { width: 68px; }
.rtab:nth-child(4) { width: 78px; }
.rtab:nth-child(5) { width: 44px; }
.rtab:nth-child(6) { width: 64px; }
.rtab:nth-child(7) { width: 58px; }
.rtab:nth-child(8) { width: 62px; }
.rtab:nth-child(9) { width: 80px; }
.rtab:nth-child(10) { width: 90px; }
.rtab:nth-child(11) { width: 96px; }
.rtab.active { background: #3b4453; color: #fff; }
.rtoggle { margin-left: 16px; width: 15px; height: 7px; background: #e8e8e8; display: flex; justify-content: center; align-items: center; margin-right: 3px; }
.tri-w { width: 0; height: 0; border: 2px solid transparent; border-top-width: 0; border-bottom: 3px solid #444; }

/* ribbon */
.ribbon { margin-left: 2px; width: 1910px; height: 99px; background: #3b4453; display: flex; }
.panel { display: flex; flex-direction: column; border-right: 1px solid #2a3039; flex: none; color: #d8dbdf; }
.p-draw { width: 224px; } .p-modify { width: 250px; } .p-annot { width: 190px; } .p-layers { width: 273px; }
.p-block { width: 160px; } .p-props { width: 265px; } .p-groups { width: 69px; } .p-util { width: 97px; }
.p-clip { width: 91px; } .p-view { flex: 1; border-right: 0; }
.pbody { height: 80px; padding-top: 5px; display: flex; }
.ptitle { height: 19px; display: flex; align-items: center; justify-content: center; gap: 5px; }
.pt-launch { position: relative; }
.pt-c { display: flex; align-items: center; gap: 5px; }
.launch { position: absolute; right: 3px; top: 2px; font-size: 9px; color: #c4c8ce; }
.pt-left { justify-content: flex-start; padding-left: 6px; position: relative; }
.launch.l2 { left: 49px; right: auto; }
.tool { display: flex; flex-direction: column; align-items: center; flex: none; padding-top: 1px; }
.tool > span { line-height: 15px; white-space: nowrap; }
.tool .ar { margin-top: 2px; }
.tool > .big-a { font: 38px/38px "Liberation Sans", sans-serif; color: #d9d9d9; height: 38px; }
.col { display: flex; flex-direction: column; flex: none; }
.f1 { flex: 1; }
.row { height: 24px; display: flex; align-items: center; white-space: nowrap; }
.rc { justify-content: center; }
.lab { margin-left: 6px; }
.g5 .lab { margin-left: 5px; }
.g4 .lab { margin-left: 4px; }
.g8 { gap: 8px; }
.g8 .lab-l { margin-left: -3px; }
.w17 { width: 17px; } .w24 { width: 24px; } .w34 { width: 34px; } .w42 { width: 42px; } .w44 { width: 44px; }
.w48 { width: 48px; } .w56 { width: 56px; } .w58 { width: 58px; } .w62 { width: 62px; } .w64 { width: 64px; }
.w66 { width: 66px; } .w70 { width: 70px; } .w74 { width: 74px; } .w75 { width: 75px; } .w79 { width: 79px; }
.pl3 { padding-left: 3px; } .pl4 { padding-left: 4px; } .pl7 { padding-left: 7px; }
.pr6 { padding-right: 6px; } .pr7 { padding-right: 7px; } .pr8 { padding-right: 8px; } .pr9 { padding-right: 9px; } .pr15 { padding-right: 15px; }
.hl { outline: 1px solid #6fb3ea; outline-offset: -1px; height: 22px; margin-top: 1px; }
.p-util .col { padding-left: 1px; }

.combo { display: flex; align-items: center; background: #4c5667; height: 21px; border: 1px solid #2a3039; position: relative; white-space: nowrap; }
.c-layer { width: 207px; margin-top: 1px; margin-bottom: 2px; padding-left: 3px; gap: 3px; }
.swatch { width: 14px; height: 14px; background: #f2f2f2; margin-left: 1px; margin-right: 2px; flex: none; }
.combo-ar { position: absolute; right: 3px; top: 7px; }
.combos { width: 179px; gap: 3px; padding-top: 2px; }
.c-prop { width: 179px; padding-left: 6px; }
.c-prop .sw-p { margin: 0 5px 0 0; }
.ln { width: 64px; height: 1px; background: #e8e8e8; flex: none; }
.bl { margin-left: 3px; }

/* file tabs */
.ftabs { height: 27px; display: flex; align-items: center; position: relative; color: #cfd3d8; }
.slash { display: block; width: 1px; height: 17px; background: #48505c; transform: skewX(-20deg); flex: none; }
.ftabs .slash:first-child { margin-left: 14px; }
.ftab { line-height: 27px; }
.ftabs .ftab:nth-child(2) { margin-left: 9px; width: 36px; }
.ftabs .ftab.active { background: #3b4453; height: 27px; width: 82px; padding-left: 14px; clip-path: polygon(8px 0, 100% 0, calc(100% - 8px) 100%, 0 100%); display: flex; align-items: center; color: #fff; }
.ftab b { font-weight: 500; }
.fx { margin-left: 7px; font-size: 11px; color: #aab0b8; }
.fplus { margin-left: 5px; font-size: 22px; width: 20px; text-align: center; color: #e4e6e8; font-weight: 300; }
.ftabs .slash:last-child { margin-left: 11px; }

.strip { height: 4px; margin: 0 4px 0 3px; background: #3a4351; }

/* canvas */
.canvas {
  height: 813px; margin: 0 4px 0 3px; position: relative; overflow: hidden; background-color: #222933;
  background-image:
    linear-gradient(to right, #383e4a 1px, transparent 1px),
    linear-gradient(to bottom, #383e4a 1px, transparent 1px),
    linear-gradient(to right, #2a303b 1px, transparent 1px),
    linear-gradient(to bottom, #2a303b 1px, transparent 1px);
  background-size: 115px 100%, 100% 115px, 23px 100%, 100% 23px;
  background-position: 20px 0, 0 112px, 20px 0, 0 20px;
}
.vp-label { position: absolute; left: 4px; top: 7px; font-size: 12.500px; color: #d2d4d6; z-index: 1; white-space: nowrap; }
.drawing { position: absolute; left: 0; top: 0; display: block; }
.green path { fill: none; stroke: #0e5a28; stroke-width: 1.300; }
.wh, .wh path, .wh rect, .wh circle { fill: none; stroke: #f2f2f2; stroke-width: 1.500; }
.wh .thin, .wh.thin circle, .wh path.thin { stroke-width: 1; }
.black { fill: none; stroke: #000; stroke-width: 1.500; }
.red { fill: none; stroke: #d21f2b; stroke-width: 1.500; }
.cg { fill: none; stroke: #7c7c7c; stroke-width: 1.200; }
.cd { fill: none; stroke: #666; stroke-width: 1; }
.cw { fill: none; stroke: #f0f0f0; stroke-width: 1.300; }
.sc { fill: none; stroke: #f2f2f2; stroke-width: 1; }
.inner { fill: none; stroke: #b8b8b8; stroke-width: 1.300; }
.dtxt { font: 13.300px "Liberation Sans", sans-serif; fill: #e8e8e8; }
.rel { fill: none; stroke: #f2f2f2; stroke-width: 1.300; }
.rl { fill: none; stroke: #f2f2f2; stroke-width: 1; }
.rlw { fill: #222933; stroke: #f2f2f2; stroke-width: 1; }
.ucs path, .ucs rect { fill: none; stroke: #e8e8e8; stroke-width: 1; }
.ucs-t { font: 300 15px Roboto, sans-serif; fill: #e8e8e8; }
.ring { fill: none; stroke: #474c55; stroke-width: 12; }
.vc-o { fill: #a8abae; }
.vc-i { fill: #999c9f; }
.vc-top { font: bold 13px "Liberation Sans", sans-serif; fill: #4a4f57; text-anchor: middle; }
.vc-d { font: bold 22px "Liberation Sans", sans-serif; fill: #b0b3b7; text-anchor: middle; }
.wcs { fill: #8e91a1; }
.wcs-t { font: 11px "Liberation Sans", sans-serif; fill: #50545e; }
.wcs-ar { fill: none; stroke: #a6a9b6; }
.vp-ctl path { fill: none; stroke: #e0e0e0; stroke-width: 1.500; }
.vp-ctl .vp-x { stroke-width: 2; }
.nav path, .nav circle { fill: none; stroke: #7a808c; stroke-width: 1; }
.nav-bg { fill: #5a606c; }

.cmd { position: absolute; left: 394px; top: 787px; height: 26px; display: flex; align-items: stretch; }
.cmd-tools { width: 57px; background: #252b35; display: flex; align-items: center; gap: 6px; padding-left: 2px; }
.grip { width: 5px; height: 14px; background-image: radial-gradient(circle, #bfc2c6 1px, transparent 1.200px); background-size: 2.500px 3px; flex: none; }
.cmd-tools .ic:nth-of-type(1) { margin-left: -2px; }
.cmd-tools .ic:nth-of-type(2) { margin-left: 2px; }
.cmd-input { width: 1069px; height: 25px; background: #b9bbbd; border-radius: 0 2px 2px 0; display: flex; align-items: center; padding-left: 3px; }
.cmd-i { stroke: #3d4148; }
.cmd-text { margin-left: 7px; font: italic 11.700px "Liberation Mono", monospace; color: #686a6e; }
.tri-up { width: 0; height: 0; border: 4px solid transparent; border-top-width: 0; border-bottom: 4px solid #4b4f55; margin-left: auto; margin-right: 3px; }
.cursor { position: absolute; left: 1230px; top: 714px; }
.cursor path { fill: none; stroke: #f4f4f4; stroke-width: 1; }

/* status */
.status { height: 29px; margin: 0 5px 0 3px; background: #20262f; display: flex; justify-content: space-between; position: relative; }
.ltabs { display: flex; align-items: center; height: 26px; margin-left: 1px; }
.ltab { white-space: nowrap; }
.ltab.active { width: 68px; height: 26px; margin-left: 8px; background: #3b4453; color: #fff; font-weight: 700; line-height: 26px; text-align: center; clip-path: polygon(10px 0, 100% 0, calc(100% - 6px) 100%, 0 100%); }
.l1 { margin-left: 8px; width: 53px; }
.l2t { margin-left: 11px; width: 55px; }
.lplus { font-size: 20px; width: 24px; margin-left: 8px; text-align: center; color: #e4e6e8; }
.ltabs .slash:last-child { margin-left: 6px; }
.sbar { display: flex; align-items: stretch; gap: 3px; height: 24px; margin-top: 2px; }
.sg1 { display: flex; align-items: center; background: #3b4453; height: 24px; flex: none; }
.model { width: 47px; text-align: center; color: #e6e8ea; }
.sb { display: flex; align-items: center; justify-content: center; width: 23px; height: 24px; flex: none; }
.sb.on { background: #5b93cd; }
.sb.m2 { margin-left: 2px; }
.sb.w22 { width: 22px; } .sb.w24 { width: 24px; } .sb.w25 { width: 25px; } .sb.w26 { width: 26px; }
.sar { width: 17px; display: flex; justify-content: center; flex: none; }
.sar.narrow { width: 13px; } .sar.w16 { width: 16px; }
.scale { width: 21px; text-align: center; color: #e0e2e5; }
.bl1 { border-left: 1px solid #2a3039; }
.slast { width: 49px; }

/* taskbar */
.taskbar { height: 48px; margin-top: 4px; position: relative; display: flex; justify-content: space-between; background: linear-gradient(90deg, #201e1f 0%, #1f1f21 45%, #17242e 75%, #15242f 100%); border-top: 1px solid #3a3836; }
.task-l { display: flex; align-items: center; padding-left: 12px; position: relative; }
.tk { width: 44px; height: 40px; display: flex; align-items: center; justify-content: center; flex: none; }
.tk.w-start { width: 43px; }
.tic { width: 24px; height: 24px; display: block; overflow: visible; }
.tk.tk-act { width: 35px; margin-left: 3px; background: #36343a; border-radius: 4px; box-shadow: 3px 0 0 #2b2a2f; }
.t-a { font: bold 13px "Liberation Sans", sans-serif; fill: #fff; text-anchor: middle; }
.t-cad { font: bold 5px "Liberation Sans", sans-serif; fill: #f0d0d8; text-anchor: middle; }
.dot { position: absolute; top: 39px; width: 6px; height: 3px; border-radius: 2px; background: #8a8a8a; }
.d1 { left: 74px; } .d2 { left: 118px; } .d3 { left: 162px; }
.dot.d4 { left: 201px; width: 16px; background: #d9a3e8; }
.tray { display: flex; align-items: center; padding-right: 20px; color: #e4e6e8; }
.tri-caret { margin-right: 14px; }
.tic-s { width: 16px; height: 16px; margin-right: 8px; display: block; }
.clock { display: flex; flex-direction: column; align-items: flex-end; width: 68px; font-size: 11.500px; line-height: 16px; }
.badge { margin-left: 10px; width: 16px; height: 16px; border-radius: 50%; background: #d9a3e8; color: #222; font-size: 10px; line-height: 16px; text-align: center; }
```
